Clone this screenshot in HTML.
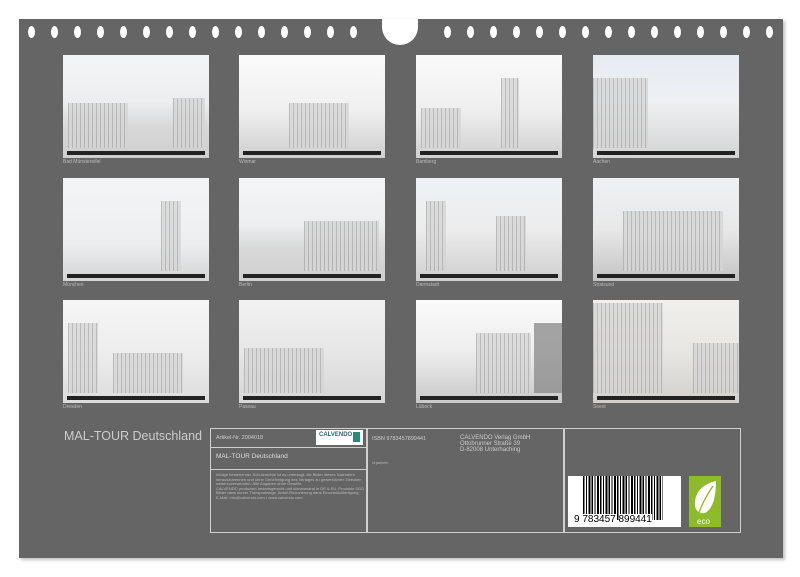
<!DOCTYPE html>
<html><head><meta charset="utf-8"><style>
*{margin:0;padding:0;box-sizing:border-box}
body{width:800px;height:577px;background:#fff;position:relative;overflow:hidden;font-family:"Liberation Sans",sans-serif}
#panel{position:absolute;left:19px;top:19px;width:764px;height:539px;background:#656565;box-shadow:2px 2px 3px rgba(0,0,0,.25)}
.hole{position:absolute;top:26px;width:7px;height:12px;border-radius:50%;background:#fff}
#notch{position:absolute;left:382px;top:19px;width:36px;height:26px;background:#fff;border-radius:0 0 18px 18px}
.th{position:absolute;width:146px;height:103px;background:linear-gradient(#f4f5f7 0%,#eceef0 45%,#d8d8d8 70%,#cfcfcf 100%);overflow:hidden}
.th .b{position:absolute;bottom:10px;background:repeating-linear-gradient(90deg,#aaa 0 1px,#d4d4d4 1px 4px);opacity:.75}
.th .s{position:absolute;left:4px;right:4px;bottom:3px;height:4px;background:#222}
.cap{position:absolute;font-size:5px;color:#bbb}
.box{position:absolute;border:1.5px solid #d0d0d0}
.t{position:absolute;color:#ddd}
</style></head><body>
<div id="panel"></div>
<div id="notch"></div>
<div class="hole" style="left:28px"></div><div class="hole" style="left:51px"></div><div class="hole" style="left:74px"></div><div class="hole" style="left:97px"></div><div class="hole" style="left:120px"></div><div class="hole" style="left:143px"></div><div class="hole" style="left:166px"></div><div class="hole" style="left:189px"></div><div class="hole" style="left:212px"></div><div class="hole" style="left:235px"></div><div class="hole" style="left:258px"></div><div class="hole" style="left:281px"></div><div class="hole" style="left:304px"></div><div class="hole" style="left:327px"></div><div class="hole" style="left:350px"></div>
<div class="hole" style="left:444px"></div><div class="hole" style="left:467px"></div><div class="hole" style="left:490px"></div><div class="hole" style="left:513px"></div><div class="hole" style="left:536px"></div><div class="hole" style="left:559px"></div><div class="hole" style="left:582px"></div><div class="hole" style="left:605px"></div><div class="hole" style="left:628px"></div><div class="hole" style="left:651px"></div><div class="hole" style="left:674px"></div><div class="hole" style="left:697px"></div><div class="hole" style="left:720px"></div><div class="hole" style="left:743px"></div><div class="hole" style="left:766px"></div>

<!-- row 1 -->
<div class="th" style="left:63px;top:55px"><div class="b" style="left:5px;width:60px;height:45px"></div><div class="b" style="left:110px;width:32px;height:50px"></div><div class="s"></div></div>
<div class="th" style="left:239px;top:55px;background:linear-gradient(#fbfbfb,#efefef 55%,#cfcfcf)"><div class="b" style="left:50px;width:60px;height:45px"></div><div class="s"></div></div>
<div class="th" style="left:416px;top:55px;background:linear-gradient(#fafafa,#eee 55%,#d0d0d0)"><div class="b" style="left:85px;width:18px;height:70px"></div><div class="b" style="left:5px;width:40px;height:40px"></div><div class="s"></div></div>
<div class="th" style="left:593px;top:55px;background:linear-gradient(#e6ebf2,#eef0f3 45%,#d4d4d4)"><div class="b" style="left:0;width:55px;height:70px"></div><div class="s"></div></div>
<div class="cap" style="left:63px;top:159px">Bad Münstereifel</div>
<div class="cap" style="left:239px;top:159px">Wismar</div>
<div class="cap" style="left:416px;top:159px">Bamberg</div>
<div class="cap" style="left:593px;top:159px">Aachen</div>
<!-- row 2 -->
<div class="th" style="left:63px;top:178px;background:linear-gradient(#f4f5f7,#eceef0 65%,#d4d4d4)"><div class="b" style="left:98px;width:20px;height:70px"></div><div class="s"></div></div>
<div class="th" style="left:239px;top:178px"><div class="b" style="left:65px;width:75px;height:50px"></div><div class="s"></div></div>
<div class="th" style="left:416px;top:178px;background:linear-gradient(#eef2f6,#ececec 50%,#cfcfcf)"><div class="b" style="left:10px;width:20px;height:70px"></div><div class="b" style="left:80px;width:30px;height:55px"></div><div class="s"></div></div>
<div class="th" style="left:593px;top:178px;background:linear-gradient(#eef1f4,#e8e8e8 50%,#c4c4c4)"><div class="b" style="left:30px;width:100px;height:60px"></div><div class="s"></div></div>
<div class="cap" style="left:63px;top:282px">München</div>
<div class="cap" style="left:239px;top:282px">Berlin</div>
<div class="cap" style="left:416px;top:282px">Darmstadt</div>
<div class="cap" style="left:593px;top:282px">Stralsund</div>
<!-- row 3 -->
<div class="th" style="left:63px;top:300px;background:linear-gradient(#f6f6f6,#ececec 55%,#dcdcdc)"><div class="b" style="left:5px;width:30px;height:70px"></div><div class="b" style="left:50px;width:70px;height:40px"></div><div class="s"></div></div>
<div class="th" style="left:239px;top:300px;background:linear-gradient(#f2f2f2,#e6e6e6 50%,#d6d6d6)"><div class="b" style="left:5px;width:80px;height:45px"></div><div class="s"></div></div>
<div class="th" style="left:416px;top:300px;background:linear-gradient(#fafafa,#eee 50%,#c8c8c8)"><div class="b" style="left:60px;width:55px;height:60px"></div><div class="b" style="left:118px;width:28px;height:70px;background:#888"></div><div class="s"></div></div>
<div class="th" style="left:593px;top:300px;background:linear-gradient(#f0efec,#e8e6e2 50%,#d2d0cc)"><div class="b" style="left:0;width:70px;height:90px"></div><div class="b" style="left:100px;width:46px;height:50px"></div><div class="s"></div></div>
<div class="cap" style="left:63px;top:404px">Dresden</div>
<div class="cap" style="left:239px;top:404px">Passau</div>
<div class="cap" style="left:416px;top:404px">Lübeck</div>
<div class="cap" style="left:593px;top:404px">Soest</div>

<div class="t" style="left:64px;top:429px;font-size:12.5px;color:#ccc">MAL-TOUR Deutschland</div>

<div class="box" style="left:210px;top:428px;width:158px;height:105px"></div>
<div style="position:absolute;left:210px;top:447px;width:158px;border-top:1.5px solid #d0d0d0"></div>
<div style="position:absolute;left:210px;top:469px;width:158px;border-top:1.5px solid #d0d0d0"></div>
<div class="box" style="left:366px;top:428px;width:199px;height:105px"></div>
<div class="box" style="left:563px;top:428px;width:178px;height:105px"></div>
<div class="t" style="left:216px;top:435px;font-size:5.5px;color:#ccc">Artikel-Nr. 2004018</div>
<div style="position:absolute;left:316px;top:430px;width:47px;height:15px;background:#fff"><div style="font-size:6px;color:#267;padding:2px 0 0 3px;font-weight:bold">CALVENDO</div><div style="position:absolute;right:3px;top:2px;width:7px;height:10px;background:#2a8a78"></div></div>
<div class="t" style="left:216px;top:453px;font-size:6.5px">MAL-TOUR Deutschland</div>
<div class="t" style="left:216px;top:473px;font-size:4px;line-height:4.6px;width:150px;color:#bbb">Infolge bestehender Schutzrechte ist es untersagt, die Bilder dieses Kalenders herauszutrennen und ohne Genehmigung des Verlages zu gewerblichen Zwecken weiterzuverwenden. Alle Angaben ohne Gewähr.<br>CALVENDO produziert bedarfsgerecht und klimaneutral in DE &amp; EU. Produkte DDD Bilder dank kurzer Transportwege. Abfall-Reduzierung dank Einzelstückfertigung.<br>E-Mail: info@calvendo.com • www.calvendo.com</div>
<div class="t" style="left:372px;top:436px;font-size:5.5px;color:#ccc">ISBN 9783457899441</div>
<div class="t" style="left:372px;top:461px;font-size:3.5px;color:#bbb">Urpsehehr</div>
<div class="t" style="left:460px;top:435px;font-size:6px;line-height:6px;color:#ccc">CALVENDO Verlag GmbH<br>Ottobrunner Straße 39<br>D-82008 Unterhaching</div>

<div style="position:absolute;left:568px;top:476px;width:113px;height:51px;background:#fff">
<div style="position:absolute;left:15px;top:0;width:80px;height:44px;background:repeating-linear-gradient(90deg,#000 0 1.5px,#fff 1.5px 3px,#000 3px 4px,#fff 4px 5.5px,#000 5.5px 7.5px,#fff 7.5px 8.5px)"></div>
<div style="position:absolute;left:6px;top:38px;font-size:10px;color:#000;white-space:nowrap"><span style="background:#fff">9</span> <span style="background:#fff">783457</span> <span style="background:#fff">899441</span></div>
</div>
<div style="position:absolute;left:689px;top:476px;width:32px;height:51px;background:#8dbb2a">
<svg width="32" height="51" viewBox="0 0 32 51"><path d="M27 5 C14 8 5 16 6 30 C7 36 12 38 16 37 C24 33 27 20 27 5 Z" fill="#fff"/><path d="M24 10 C17 20 12 30 8 42" stroke="#8dbb2a" stroke-width="1.3" fill="none"/><text x="8" y="48" font-size="8" fill="#fff" font-family="Liberation Sans">eco</text></svg>
</div>
</body></html>
